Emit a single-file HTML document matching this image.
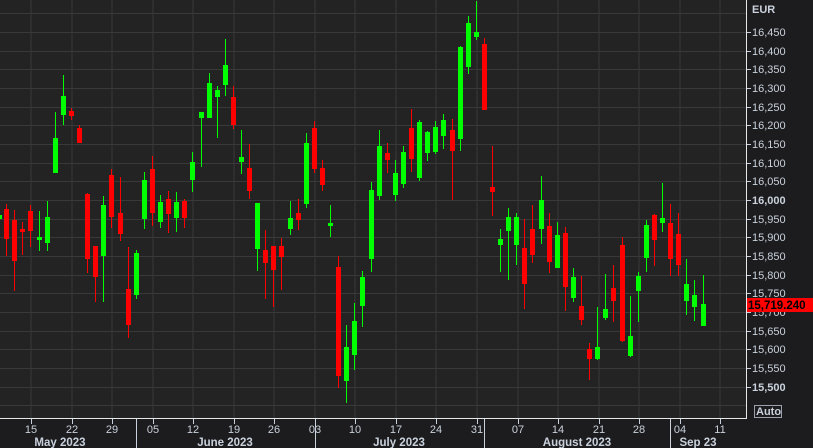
<!DOCTYPE html>
<html><head><meta charset="utf-8"><style>
html,body{margin:0;padding:0;background:#1c1c1e;width:813px;height:448px;overflow:hidden}
svg{display:block}
text{font-family:"Liberation Sans",Arial,sans-serif;fill:#c9d1dc}
</style></head><body>
<svg width="813" height="448" viewBox="0 0 813 448" xmlns="http://www.w3.org/2000/svg">
<rect x="0" y="0" width="813" height="448" fill="#1c1c1e"/>
<rect x="0" y="0" width="746" height="418" fill="#222322"/>
<g stroke="#383938" stroke-width="1">
<path d="M0 13.5H746M0 32.5H746M0 51.5H746M0 69.5H746M0 88.5H746M0 107.5H746M0 125.5H746M0 144.5H746M0 163.5H746M0 181.5H746M0 200.5H746M0 219.5H746M0 237.5H746M0 256.5H746M0 275.5H746M0 293.5H746M0 312.5H746M0 331.5H746M0 349.5H746M0 368.5H746M0 387.5H746M0 405.5H746"/>
<path d="M31 0V418M72 0V418M112 0V418M153 0V418M193 0V418M234 0V418M274 0V418M315 0V418M355 0V418M396 0V418M436 0V418M477 0V418M518 0V418M558 0V418M599 0V418M639 0V418M680 0V418M720 0V418"/>
</g>
<g id="g" fill="#00ff00" stroke="#00ff00" stroke-width="1">
<rect x="0" y="215" width="2" height="4" stroke="none"/>
<path d="M39.5 211V251M47.5 201V251M55.5 112V173M63.5 75V125M103.5 196V302M136.5 250V299M144.5 172V229M160.5 195V228M176.5 192V232M192.5 152V192M201.5 112V167M209.5 73V118M217.5 86V138M225.5 39V96M241.5 130V174M257.5 203V271M290.5 201V235M306.5 133V208M330.5 205V237M346.5 325V403M354.5 303V370M362.5 271V327M371.5 182V272M379.5 130V200M395.5 160V201M403.5 146V188M419.5 120V181M427.5 131V161M435.5 121V154M443.5 114V149M460.5 46V151M468.5 16V74M476.5 1V40M500.5 229V272M508.5 208V280M516.5 213V265M541.5 176V244M557.5 222V268M573.5 268V302M597.5 307V360M605.5 274V320M630.5 296V357M638.5 272V322M646.5 220V272M662.5 183V232M686.5 259V315M694.5 280V321M703.5 275V326"/>
<g stroke="none">
<rect x="37" y="237" width="5" height="3"/><rect x="45" y="217" width="5" height="26"/><rect x="53" y="138" width="5" height="35"/><rect x="61" y="96" width="5" height="19"/><rect x="101" y="205" width="5" height="51"/><rect x="134" y="253" width="5" height="42"/><rect x="142" y="180" width="5" height="39"/><rect x="158" y="202" width="5" height="20"/><rect x="174" y="202" width="5" height="16"/><rect x="190" y="162" width="5" height="18"/><rect x="199" y="112" width="5" height="6"/><rect x="207" y="83" width="5" height="35"/><rect x="215" y="90" width="5" height="7"/><rect x="223" y="65" width="5" height="20"/><rect x="239" y="157" width="5" height="5"/><rect x="255" y="203" width="5" height="46"/><rect x="288" y="218" width="5" height="11"/><rect x="304" y="143" width="5" height="61"/><rect x="328" y="223" width="5" height="3"/><rect x="344" y="347" width="5" height="34"/><rect x="352" y="321" width="5" height="34"/><rect x="360" y="277" width="5" height="29"/><rect x="369" y="190" width="5" height="69"/><rect x="377" y="146" width="5" height="50"/><rect x="393" y="173" width="5" height="22"/><rect x="401" y="152" width="5" height="32"/><rect x="417" y="122" width="5" height="56"/><rect x="425" y="132" width="5" height="21"/><rect x="433" y="127" width="5" height="25"/><rect x="441" y="120" width="5" height="16"/><rect x="458" y="47" width="5" height="92"/><rect x="466" y="23" width="5" height="44"/><rect x="474" y="32" width="5" height="5"/><rect x="498" y="239" width="5" height="6"/><rect x="506" y="217" width="5" height="14"/><rect x="514" y="217" width="5" height="28"/><rect x="539" y="200" width="5" height="29"/><rect x="555" y="235" width="5" height="33"/><rect x="571" y="277" width="5" height="21"/><rect x="595" y="347" width="5" height="12"/><rect x="603" y="309" width="5" height="9"/><rect x="628" y="336" width="5" height="20"/><rect x="636" y="276" width="5" height="15"/><rect x="644" y="225" width="5" height="33"/><rect x="660" y="218" width="5" height="5"/><rect x="684" y="284" width="5" height="17"/><rect x="692" y="295" width="5" height="12"/><rect x="701" y="304" width="5" height="22"/>
</g></g>
<g fill="#ff0000" stroke="#ff0000" stroke-width="1">
<path d="M6.5 204V256M14.5 210V291M22.5 222V255M30.5 205V247M71.5 108V120M79.5 125V143M87.5 193V273M95.5 246V302M111.5 169V228M120.5 177V241M128.5 247V338M152.5 156V226M168.5 191V233M184.5 199V228M233.5 86V129M249.5 144V199M265.5 230V299M273.5 246V307M281.5 238V290M298.5 199V230M314.5 121V173M322.5 160V191M338.5 256V388M387.5 143V173M411.5 109V172M452.5 119V200M484.5 38V110M492.5 146V216M524.5 219V309M532.5 205V263M549.5 213V273M565.5 227V311M581.5 276V325M589.5 343V380M613.5 265V322M622.5 237V342M654.5 214V266M670.5 204V276M678.5 213V276"/>
<g stroke="none">
<rect x="4" y="209" width="5" height="30"/><rect x="12" y="220" width="5" height="41"/><rect x="20" y="229" width="5" height="3"/><rect x="28" y="211" width="5" height="20"/><rect x="69" y="111" width="5" height="5"/><rect x="77" y="128" width="5" height="15"/><rect x="85" y="194" width="5" height="65"/><rect x="93" y="246" width="5" height="31"/><rect x="109" y="175" width="5" height="42"/><rect x="118" y="213" width="5" height="21"/><rect x="126" y="289" width="5" height="36"/><rect x="150" y="169" width="5" height="44"/><rect x="166" y="199" width="5" height="15"/><rect x="182" y="201" width="5" height="17"/><rect x="231" y="97" width="5" height="28"/><rect x="247" y="168" width="5" height="23"/><rect x="263" y="250" width="5" height="13"/><rect x="271" y="246" width="5" height="24"/><rect x="279" y="246" width="5" height="11"/><rect x="296" y="213" width="5" height="7"/><rect x="312" y="128" width="5" height="41"/><rect x="320" y="168" width="5" height="17"/><rect x="336" y="267" width="5" height="109"/><rect x="385" y="153" width="5" height="7"/><rect x="409" y="128" width="5" height="31"/><rect x="450" y="130" width="5" height="21"/><rect x="482" y="44" width="5" height="66"/><rect x="490" y="187" width="5" height="5"/><rect x="522" y="248" width="5" height="36"/><rect x="530" y="229" width="5" height="26"/><rect x="547" y="226" width="5" height="36"/><rect x="563" y="233" width="5" height="54"/><rect x="579" y="306" width="5" height="14"/><rect x="587" y="349" width="5" height="10"/><rect x="611" y="288" width="5" height="13"/><rect x="620" y="245" width="5" height="96"/><rect x="652" y="215" width="5" height="25"/><rect x="668" y="223" width="5" height="36"/><rect x="676" y="234" width="5" height="31"/>
</g></g>
<!-- axes -->
<path d="M0 418.5H746.5V0" stroke="#e8e8e8" stroke-width="1" fill="none"/>
<g stroke="#c9d1dc" stroke-width="1">
<path d="M747 32.5H751M747 51.5H751M747 69.5H751M747 88.5H751M747 107.5H751M747 125.5H751M747 144.5H751M747 163.5H751M747 181.5H751M747 200.5H751M747 219.5H751M747 237.5H751M747 256.5H751M747 275.5H751M747 293.5H751M747 312.5H751M747 331.5H751M747 349.5H751M747 368.5H751M747 387.5H751"/>
<path d="M31.5 419V424M72.5 419V424M112.5 419V424M136.5 419V424M153.5 419V424M193.5 419V424M234.5 419V424M274.5 419V424M315.5 419V424M355.5 419V424M396.5 419V424M436.5 419V424M477.5 419V424M484.5 419V424M518.5 419V424M558.5 419V424M599.5 419V424M639.5 419V424M670.5 419V424M680.5 419V424M720.5 419V424"/>
<path d="M136.5 423V448M315.5 423V448M484.5 423V448M670.5 423V448"/>
</g>
<g font-size="11">
<text x="752" y="13" font-weight="bold">EUR</text>
<text x="752" y="36">16,450</text><text x="752" y="55">16,400</text><text x="752" y="73">16,350</text><text x="752" y="92">16,300</text><text x="752" y="111">16,250</text><text x="752" y="129">16,200</text><text x="752" y="148">16,150</text><text x="752" y="167">16,100</text><text x="752" y="185">16,050</text><text x="752" y="204" font-weight="bold">16,000</text><text x="752" y="223">15,950</text><text x="752" y="241">15,900</text><text x="752" y="260">15,850</text><text x="752" y="279">15,800</text><text x="752" y="297">15,750</text><text x="752" y="316">15,700</text><text x="752" y="335">15,650</text><text x="752" y="353">15,600</text><text x="752" y="372">15,550</text><text x="752" y="391" font-weight="bold">15,500</text>
</g>
<rect x="747" y="298" width="66" height="14" fill="#ff0000"/>
<text x="748" y="309" font-size="11.5" font-weight="bold" style="fill:#000">15,719.240</text>
<rect x="754.5" y="405.5" width="27" height="12" fill="none" stroke="#9aa3ad"/>
<text x="756" y="415" font-size="11" font-weight="bold">Auto</text>
<g font-size="11" text-anchor="middle">
<text x="31" y="433">15</text><text x="72" y="433">22</text><text x="112" y="433">29</text><text x="153" y="433">05</text><text x="193" y="433">12</text><text x="234" y="433">19</text><text x="274" y="433">26</text><text x="315" y="433">03</text><text x="355" y="433">10</text><text x="396" y="433">17</text><text x="436" y="433">24</text><text x="477" y="433">31</text><text x="518" y="433">07</text><text x="558" y="433">14</text><text x="599" y="433">21</text><text x="639" y="433">28</text><text x="680" y="433">04</text><text x="720" y="433">11</text>
</g>
<g font-size="11.5" font-weight="bold" text-anchor="middle">
<text x="60" y="446">May 2023</text><text x="225" y="446">June 2023</text><text x="399" y="446">July 2023</text><text x="577" y="446">August 2023</text><text x="698" y="446">Sep 23</text>
</g>
</svg>
</body></html>
